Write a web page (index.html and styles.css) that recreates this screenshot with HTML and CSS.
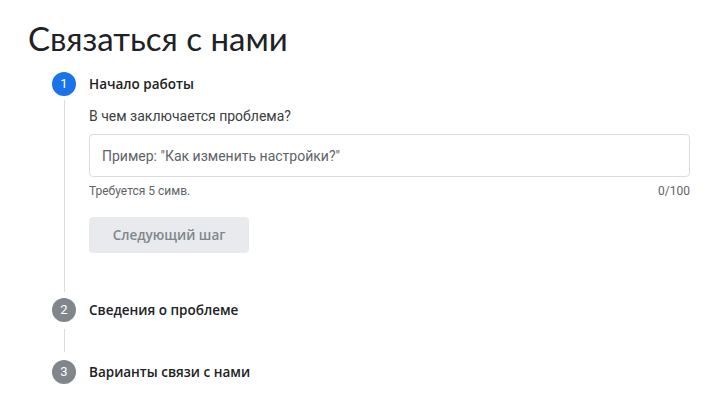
FILE: index.html
```html
<!DOCTYPE html>
<html lang="ru">
<head>
    <meta charset="UTF-8">
    <meta name="viewport" content="width=device-width, initial-scale=1.0">
    <title>Связаться с нами</title>
    <link rel="stylesheet" href="styles.css">
</head>
<body>
    <h1 class="page-title">Связаться с нами</h1>

    <div class="stepper">
        <div class="step step-active">
            <div class="step-num">1</div>
            <div class="step-title">Начало работы</div>
            <div class="step-rail"><div class="rail-line"></div></div>
            <div class="step-body">
                <label class="field-label" for="problem">В чем заключается проблема?</label>
                <input type="text" id="problem" class="field-input" placeholder="Пример: &quot;Как изменить настройки?&quot;">
                <div class="field-hint">
                    <span>Требуется 5 симв.</span>
                    <span>0/100</span>
                </div>
                <button class="next-btn" disabled>Следующий шаг</button>
            </div>
        </div>

        <div class="step step-short">
            <div class="step-num">2</div>
            <div class="step-title">Сведения о проблеме</div>
            <div class="step-rail"><div class="rail-line"></div></div>
            <div class="step-body"></div>
        </div>

        <div class="step">
            <div class="step-num">3</div>
            <div class="step-title">Варианты связи с нами</div>
        </div>
    </div>
</body>
</html>
```

FILE: styles.css
```css
body {
    margin: 0;
    font-family: Roboto, Arial, sans-serif;
    color: #202124;
    background: #fff;
}
.page-title {
    margin: 0;
    padding: 16px 0 0 28px;
    font-family: Lato, "Open Sans", Arial, sans-serif;
    font-weight: 400;
    font-size: 33px;
    line-height: 44px;
    color: #202124;
}
.stepper {
    padding: 12px 37px 0 52px;
}
.step {
    display: grid;
    grid-template-columns: 24px 1fr;
    column-gap: 13px;
}
.step-num {
    width: 24px;
    height: 24px;
    border-radius: 50%;
    background: #80868b;
    color: #fff;
    font-size: 13px;
    line-height: 24px;
    text-align: center;
}
.step-active .step-num {
    background: #1a73e8;
}
.step-title {
    font-family: "Open Sans", Arial, sans-serif;
    font-size: 13.5px;
    font-weight: 600;
    line-height: 24px;
    color: #202124;
}
.step-rail {
    display: flex;
    justify-content: center;
}
.rail-line {
    width: 1px;
    background: #dadce0;
    margin: 4px 0 6px;
}
.step-short .rail-line {
    margin: 7px 0 8px;
}
.step-body {
    padding: 8px 0 45px;
}
.step-short .step-body {
    padding: 0;
    height: 38px;
}
.field-label {
    display: block;
    font-size: 14px;
    line-height: 24px;
    color: #3c4043;
}
.field-input {
    display: block;
    box-sizing: border-box;
    width: 100%;
    height: 43px;
    margin-top: 6px;
    padding: 0 12px;
    border: 1px solid #dadce0;
    border-radius: 4px;
    font-family: Roboto, Arial, sans-serif;
    font-size: 14px;
    color: #202124;
    outline: none;
}
.field-input::placeholder {
    color: #5f6368;
}
.field-hint {
    display: flex;
    justify-content: space-between;
    margin-top: 6px;
    font-size: 12px;
    line-height: 16px;
    color: #5f6368;
}
.next-btn {
    display: block;
    width: 160px;
    height: 36px;
    margin-top: 18px;
    border: none;
    border-radius: 4px;
    background: #e8eaed;
    color: #80868b;
    font-family: "Open Sans", Arial, sans-serif;
    font-size: 13.5px;
    font-weight: 600;
}
```
